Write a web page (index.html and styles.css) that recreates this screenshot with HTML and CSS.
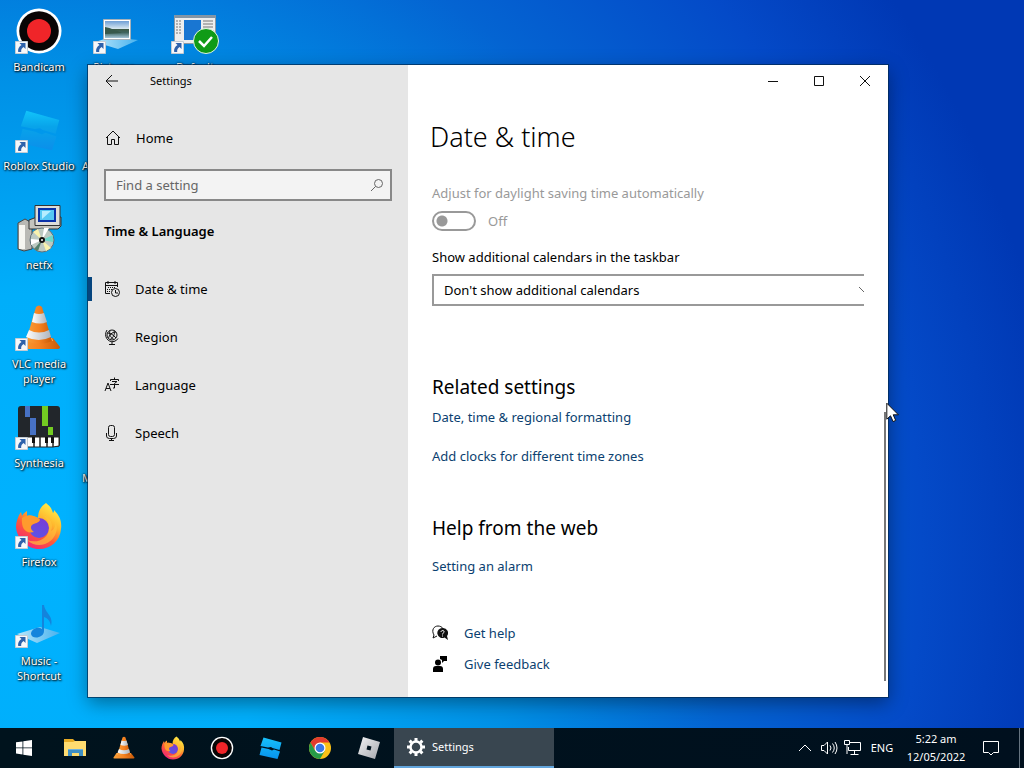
FILE: index.html
```html
<!DOCTYPE html>
<html lang="en">
<head>
<meta charset="utf-8">
<title>Settings</title>
<link rel="stylesheet" href="styles.css">
</head>
<body>
<svg class="defs" aria-hidden="true">
  <defs>
    <linearGradient id="orange" x2="1"><stop stop-color="#f9a13a"/><stop offset=".5" stop-color="#f58220"/><stop offset="1" stop-color="#c85a08"/></linearGradient>
    <linearGradient id="white" x2="1"><stop stop-color="#fff"/><stop offset="1" stop-color="#aeb4bb"/></linearGradient>
    <linearGradient id="fire" x1=".85" y1=".05" x2=".25" y2="1"><stop stop-color="#fff04a"/><stop offset=".35" stop-color="#ffb52c"/><stop offset=".62" stop-color="#ff5a37"/><stop offset="1" stop-color="#f0207c"/></linearGradient>
    <linearGradient id="violet" x1=".8" x2=".2" y2="1"><stop stop-color="#7a3bd6"/><stop offset="1" stop-color="#5b55e6"/></linearGradient>
    <linearGradient id="studio" y2="1" x2="0"><stop stop-color="#17c1fb"/><stop offset="1" stop-color="#0792ec"/></linearGradient>
    <linearGradient id="studiofade" y2="1" x2="0"><stop stop-color="#12c4fa"/><stop offset=".4" stop-color="#08a4ea"/><stop offset="1" stop-color="#0b8fea"/></linearGradient>
    <linearGradient id="silver" x2="1" y2="1"><stop stop-color="#f4f4f6"/><stop offset="1" stop-color="#a4a6ab"/></linearGradient>
    <linearGradient id="tray" x2="1"><stop stop-color="#b8e6fb"/><stop offset="1" stop-color="#48b2ee"/></linearGradient>
    <linearGradient id="photo" x2="0" y2="1"><stop stop-color="#6f9fd6"/><stop offset=".45" stop-color="#d5e6f0"/><stop offset=".5" stop-color="#3d5a48"/><stop offset=".68" stop-color="#40655f"/><stop offset="1" stop-color="#a4c5d8"/></linearGradient>
    <symbol id="arrow" viewBox="0 0 13 13"><path fill="#f6f8fa" stroke="#c4ccd4" d="M.5.5h12v12H.5z"/><path fill="#2e62ab" d="M4.500 2h6v6L8.600 6.100C6.700 7.200 6 8.600 6.200 11H3.200C2.500 8.200 4.100 5.500 6.500 4z"/></symbol>
    <symbol id="cone" viewBox="0 0 48 48"><path fill="url(#orange)" d="M9 34h29l7 9q0 2-2 2H5q-3 0-2-2z"/><path fill="#ffb45a" d="M10 34h27l1 3H9z"/><path fill="url(#orange)" d="M21 3q3-3 6 0l10 34q-12 6-26 0z"/><path fill="url(#white)" d="M19 9q5 2 10 0l3 9q-7 3-15 0z"/><path fill="url(#white)" d="M14 26q10 5 20 0l2 7q-12 6-25 0z"/></symbol>
    <symbol id="fox" viewBox="0 0 48 48"><path fill="url(#fire)" d="M31 1c4 3 6 6 7 10 1-1 1-2 1-3 6 6 8 12 7 19-1 12-10 20-22 20S2 37 1 25c0-5 2-11 5-15l1 4c1-2 3-4 5-5v5c4-1 8 0 11 2 0-7 3-12 8-15z"/><circle cx="24" cy="26" r="10" fill="url(#violet)"/><path fill="#ff9a2d" d="M7 16c4-3 9-3 13-1 3 1 5 1 5 3-1 3-5 3-8 5-2 2-1 5 2 7-8 2-13-3-12-14z"/><path fill="#ffc53a" d="M28 13c7 2 11 9 8 16 4-2 5-6 4-10 5 9-1 20-10 23-6 2-13 1-18-4 10 4 22-1 22-12 0-6-2-9-6-13z" opacity=".65"/></symbol>
    <symbol id="record" viewBox="0 0 48 48"><circle cx="24" cy="24" r="22.500" fill="#fff"/><circle cx="24" cy="24" r="19.800" fill="#090505"/><circle cx="24" cy="24" r="12" fill="#f02529"/></symbol>
    <symbol id="studioicon" viewBox="0 0 48 48"><path d="M9 3l36 10-4 15-14-4-3-2-6 1-15-3zM5 23l14 3 7 3 4-2 12 4-5 15L1 38z"/></symbol>
  </defs>
</svg>
<div class="screen">
  <main class="desktop">
    <div class="shortcuts">
      <div class="shortcut"><svg class="shortcut-icon" viewBox="0 0 48 48"><use href="#record"/><use href="#arrow" y="34" width="13" height="13"/></svg><span>Bandicam</span></div>
      <div class="shortcut"><svg class="shortcut-icon" viewBox="0 0 48 48"><use href="#studioicon" x="3" y="0" width="44" height="48" fill="url(#studiofade)"/><use href="#arrow" y="34" width="13" height="13"/></svg><span>Roblox Studio</span></div>
      <div class="shortcut"><svg class="shortcut-icon" viewBox="0 0 48 48"><path fill="#b9b9b4" stroke="#444" d="M3 18l7-4 7 4v26l-8 2-6-2z"/><path fill="#f6f6f1" d="M4 20h6v24H4z"/><path fill="#c4c4be" stroke="#333" d="M14 15l8-3h24v9l-3 3H14z"/><path fill="#ddddda" stroke="#333" d="M20 .5h25v20H20z"/><path fill="#0830a8" d="M23 3h18v14H23z"/><path fill="#55c8f4" d="M25 5h14v10H25z"/><path fill="#b5edff" d="M27 6h9l-9 8z"/><circle cx="27" cy="35" r="12" fill="#bcc9c2" stroke="#607078"/><path fill="#f8f2ae" d="M27 35L18 27l5-3zM27 35l9 8-5 3z"/><path fill="#6bd8c9" d="M27 35l11-5v7z"/><path fill="#fff" d="M27 35L16 40v-6zM27 35l2-12h5z"/><path fill="#55806c" d="M27 35l-4 11-4-2z"/><circle cx="27" cy="35" r="3" fill="#111"/><circle cx="27" cy="35" r="1" fill="#fff"/></svg><span>netfx</span></div>
      <div class="shortcut"><svg class="shortcut-icon" viewBox="0 0 48 48"><use href="#cone"/><use href="#arrow" y="34" width="13" height="13"/></svg><span>VLC media<br>player</span></div>
      <div class="shortcut"><svg class="shortcut-icon" viewBox="0 0 48 48"><rect x="3" y="3" width="42" height="41" rx="3" fill="#22262b"/><path fill="#4771c4" d="M10 3h5v11h-5zM15 15h6v17h-6z"/><path fill="#73cc22" d="M27 3h6v20h-6zM33 24h5v8h-5z"/><path stroke="#222" fill="#fff" d="M12 34h7v10h-7zM19 34h6v10h-6zM25 34h7v10h-7zM32 34h6v10h-6zM38 34h6v9l-6 1z"/><path fill="#111" d="M17 34h3v6h-3zM30 34h3v6h-3zM36 34h3v6h-3z"/><use href="#arrow" y="34" width="13" height="13"/></svg><span>Synthesia</span></div>
      <div class="shortcut"><svg class="shortcut-icon" viewBox="0 0 48 48"><use href="#fox"/><use href="#arrow" y="34" width="13" height="13"/></svg><span>Firefox</span></div>
      <div class="shortcut"><svg class="shortcut-icon" viewBox="0 0 48 48"><path fill="url(#tray)" d="M2 33l23-7 20 6-23 10z"/><path fill="#1484dc" d="M27 4h2c1 8 10 11 7 21-1-6-4-8-7-9v14c0 7-12 9-13 3 0-5 7-8 11-5z"/><use href="#arrow" y="34" width="13" height="13"/></svg><span>Music -<br>Shortcut</span></div>
      <div class="shortcut"><svg class="shortcut-icon" viewBox="0 0 48 48"><path fill="url(#tray)" d="M2 35l16-5 27 3-20 9z"/><path fill="#fff" stroke="#a5b1bb" d="M10.500 12.500h27v20h-27z"/><path fill="url(#photo)" d="M12 14h24v17H12z"/><path fill="#37584b" d="M12 20c6 1 12 4 17 6l-17 1z"/><use href="#arrow" y="34" width="13" height="13"/></svg><span>Pictures -</span></div>
      <div class="shortcut behind"><div class="shortcut-icon"></div><span>A</span></div>
      <div class="shortcut"></div>
      <div class="shortcut"></div>
      <div class="shortcut behind"><div class="shortcut-icon"></div><span><br>M</span></div>
      <div class="shortcut"></div>
      <div class="shortcut"></div>
      <div class="shortcut"><svg class="shortcut-icon" viewBox="0 0 48 48"><path fill="#eee" stroke="#8b98a4" d="M3.500 8.500h41v28h-41z"/><path fill="#8395a5" d="M4 8h40v3H4z"/><path fill="#1976d2" d="M13 13h17v20H13z"/><path stroke="#777" stroke-dasharray="2 1" d="M5 14h5M5 17h5M5 20h5M5 23h5M5 26h5"/><path stroke="#777" d="M32 14h10M32 17h10M32 20h10"/><circle cx="35" cy="34" r="12.500" fill="#109b17" stroke="#e5f5e5"/><path fill="none" stroke="#fff" stroke-width="2.500" d="M28 34l5 5 8-9"/><use href="#arrow" y="34" width="13" height="13"/></svg><span>Default</span></div>
    </div>

    <section class="window" aria-label="Settings">
      <aside class="sidebar">
        <header class="sidebar-title">
          <button class="back" aria-label="Back"><svg width="14" height="14" viewBox="0 0 14 14"><path class="line" d="M13 7H1M7 1L1 7l6 6"/></svg></button>
          <span>Settings</span>
        </header>
        <a class="home" href="#"><svg width="16" height="16" viewBox="0 0 16 16"><path class="line" d="M1 8l7-7 7 7M2.500 6.500v8h4v-5h3v5h4v-8"/></svg>Home</a>
        <div class="search">
          <input type="text" placeholder="Find a setting" aria-label="Find a setting">
          <svg width="14" height="14" viewBox="0 0 14 14"><circle cx="8.500" cy="5.500" r="4" fill="none" stroke="#666"/><path stroke="#666" d="M5.500 8.500L1 13"/></svg>
        </div>
        <h2>Time &amp; Language</h2>
        <nav>
          <a class="current" href="#"><svg width="16" height="16" viewBox="0 0 16 16"><path class="line" d="M6 12.500H1.500v-11h12V6M1.500 4.500h12M4 0v3M11 0v3"/><path stroke="#111" stroke-dasharray="1 1" d="M4 6.500h7M3 8.500h5M3 10.500h4"/><circle class="line" cx="11.500" cy="11.500" r="4"/><path class="line" d="M11.500 9v3H14"/></svg>Date &amp; time</a>
          <a href="#"><svg width="16" height="16" viewBox="0 0 16 16"><circle class="line" cx="8" cy="6" r="5"/><path class="line" d="M3.500 4c3 0 6 2 8.500 5M12 3C8 3 5 6 4.500 9.500M6 1.500c-1 3 0 7 4 9M10 1.500c1 3 0 7-4 9M3 1C-1 7 4 14 10 12.500q3-1 4-3M8 13v2M5 15.500h6"/></svg>Region</a>
          <a href="#"><svg width="16" height="16" viewBox="0 0 16 16"><path class="line" d="M1 14L4 6l3 8M2 11.500h4M10.500.5V2M6.500 4V2.500h8V4M8 4.500h5l-2.500 2V11H9M6 7.500h9"/></svg>Language</a>
          <a href="#"><svg width="16" height="16" viewBox="0 0 16 16"><rect class="line" x="4.500" y=".5" width="6" height="11" rx="2"/><path class="line" d="M2.500 8v3q0 2.500 3 2.500h4q3 0 3-2.500V8M7.500 13.500v2M5 15.500h5"/></svg>Speech</a>
        </nav>
      </aside>
      <div class="pane">
        <div class="caption">
          <button aria-label="Minimize"><svg width="12" height="12" viewBox="0 0 12 12"><path class="line" d="M1 6.500h10"/></svg></button>
          <button aria-label="Maximize"><svg width="12" height="12" viewBox="0 0 12 12"><path class="line" d="M1.500 1.500h9v9h-9z"/></svg></button>
          <button aria-label="Close"><svg width="12" height="12" viewBox="0 0 12 12"><path class="line" d="M1 1l10 10M11 1L1 11"/></svg></button>
        </div>
        <h1>Date &amp; time</h1>
        <div class="content">
          <label class="disabled" for="dst">Adjust for daylight saving time automatically</label>
          <div class="toggle-row"><input id="dst" type="checkbox" role="switch" disabled><span>Off</span></div>
          <label for="calendars">Show additional calendars in the taskbar</label>
          <div class="select-clip">
            <div class="select-box">
              <select id="calendars"><option>Don't show additional calendars</option></select>
              <svg width="12" height="8" viewBox="0 0 12 8"><path fill="none" stroke="#666" d="M1 1l5 5 5-5"/></svg>
            </div>
          </div>
          <h3>Related settings</h3>
          <div class="links">
            <a href="#">Date, time &amp; regional formatting</a>
            <a href="#">Add clocks for different time zones</a>
          </div>
          <h3>Help from the web</h3>
          <div class="links web"><a href="#">Setting an alarm</a></div>
          <div class="support">
            <a href="#"><svg width="16" height="16" viewBox="0 0 16 16"><path class="line" d="M5 11l-4 2 1-3C-1 5 2 1 6 1c2 0 4 1 4.500 2"/><path fill="#111" d="M10.500 3a5 5 0 1 0 2 9.500L16 15l-1-4A5 5 0 0 0 10.500 3z"/><path fill="none" stroke="#fff" d="M9 7c0-2 3.500-2 3 0 0 1-1.500 1-1.500 2.500M10.500 10.500v1"/></svg>Get help</a>
            <a href="#"><svg width="16" height="16" viewBox="0 0 16 16"><circle cx="6" cy="6.500" r="3"/><path d="M1 16v-3q0-3 3-3h4q3 0 3 3v3zM8 0h7v5h-3l-2 2V4L8 3z"/></svg>Give feedback</a>
          </div>
        </div>
        <div class="scrollbar"></div>
      </div>
    </section>
  </main>

  <footer class="taskbar">
    <button class="start" aria-label="Start"><svg width="16" height="16" viewBox="0 0 16 16"><path fill="#fff" d="M0 2.300L6.500 1.400v6.100H0zM7.300 1.300L16 0v7.500H7.300zM0 8.300h6.500v6.200L0 13.600zM7.300 8.300H16V16l-8.700-1.300z"/></svg></button>
    <button aria-label="File Explorer"><svg width="24" height="24" viewBox="0 0 24 24"><path fill="#e8ac25" d="M1 3h9l2 2h10v15H1z"/><path fill="#ffdc70" d="M1 6h9l2-1h11v15H1z"/><path fill="#3e8fc4" d="M5 13h15v7h-4v-3H9v3H5z"/><path fill="#6fb2dc" d="M5 13h15v1H5z"/></svg></button>
    <button aria-label="VLC media player"><svg width="24" height="24"><use href="#cone"/></svg></button>
    <button aria-label="Firefox"><svg width="24" height="24"><use href="#fox"/></svg></button>
    <button aria-label="Bandicam"><svg width="24" height="24"><use href="#record"/></svg></button>
    <button aria-label="Roblox Studio"><svg width="24" height="24"><use href="#studioicon" fill="url(#studio)"/></svg></button>
    <button aria-label="Chrome"><svg width="24" height="24" viewBox="0 0 24 24"><circle cx="12" cy="12" r="11" fill="#fbc116"/><path fill="#e33b2e" d="M2.500 6.500A11 11 0 0 1 21.500 6.500H12L7.200 14.700z"/><path fill="#279b48" d="M2.500 6.500A11 11 0 0 0 12 23l4.800-8.200H7.200z"/><circle cx="12" cy="12" r="5.500" fill="#fff"/><circle cx="12" cy="12" r="4.300" fill="#3b78e7"/></svg></button>
    <button aria-label="Roblox"><svg width="24" height="24" viewBox="0 0 24 24"><path fill="url(#silver)" fill-rule="evenodd" d="M6 1l17 5-5 17-17-5zM10.500 9.500l-1 4 4 1 1-4z"/></svg></button>
    <button class="running"><svg width="20" height="20" viewBox="0 0 20 20"><circle cx="10" cy="10" r="5.500" fill="none" stroke="#fff" stroke-width="2.500"/><path stroke="#fff" stroke-width="3" d="M10 1v3M10 16v3M1 10h3M16 10h3M3.600 3.600l2 2M14.400 14.400l2 2M3.600 16.400l2-2M14.400 5.600l2-2"/></svg>Settings</button>
    <div class="tray">
      <button aria-label="Show hidden icons"><svg width="14" height="14" viewBox="0 0 14 14"><path class="light" d="M1 10l6-6 6 6"/></svg></button>
      <button aria-label="Volume"><svg width="18" height="16" viewBox="0 0 18 16"><path class="light" d="M1.500 5.500H4L7.500 2v12L4 10.500H1.500zM10 5.500q2 2.500 0 5M12.500 3.500q3.500 4.500 0 9M15 2q4 6 0 12"/></svg></button>
      <button aria-label="Network"><svg width="18" height="16" viewBox="0 0 18 16"><path class="light" d="M6 2.500h10.500v8h-12V7M.5.5h5v4h-5zM3 5v9M10.500 11v3.500M6.500 14.500h8"/></svg></button>
      <button class="language">ENG</button>
      <button class="clock"><span>5:22 am</span><span>12/05/2022</span></button>
      <button class="notifications" aria-label="Notifications"><svg width="18" height="18" viewBox="0 0 18 18"><path class="light" d="M1.500 2.500h15v11h-5L9 16l-2.500-2.500h-5z"/></svg></button>
      <button class="peek" aria-label="Show desktop"></button>
    </div>
  </footer>
  <svg class="pointer" width="14" height="21" viewBox="0 0 14 21"><path fill="#fff" stroke="#111" d="M.8 1.200v16l3.700-3.400 2.600 5.800 2.600-1.200-2.500-5.600h5.200z"/></svg>
</div>
</body>
</html>
```

FILE: styles.css
```css
* { box-sizing: border-box; }
body { margin: 0; font: 13px/20px "Noto Sans", "Open Sans", sans-serif; color: #000; }
button, input, select { font: inherit; color: inherit; margin: 0; }
button { border: 0; padding: 0; background: none; display: flex; align-items: center; justify-content: center; }
a { color: inherit; text-decoration: none; }
h1, h2, h3 { margin: 0; }
svg { flex: none; }
.defs { position: absolute; width: 0; height: 0; }
.line { fill: none; stroke: #111; }
.light { fill: none; stroke: #fff; }

.screen {
  position: relative; display: flex; flex-direction: column; height: 100vh; overflow: hidden;
  background: radial-gradient(ellipse 100% 130% at 4% 72%, #00b2ff 0%, #00aefa 26%, #0090e6 48%, #0464d2 68%, #044ac8 86%, #0038b4 100%);
}
.desktop { position: relative; flex: 1; min-height: 0; }

.shortcuts { display: grid; grid-auto-flow: column; grid-template-rows: repeat(7, 99px); grid-auto-columns: 78px; }
.shortcut { display: flex; flex-direction: column; align-items: center; gap: 4px; padding-top: 7px; color: #fff; font-size: 11px; line-height: 15px; text-align: center; white-space: nowrap; text-shadow: 1px 1px 2px #000, 0 0 2px #000; }
.shortcut-icon { width: 48px; height: 48px; flex: none; }
.behind { align-items: flex-start; padding-left: 4px; }

.window { position: absolute; inset: 65px 136px 31px 88px; display: flex; background: #fff; box-shadow: 0 0 0 1px rgba(0, 40, 80, .7), 0 6px 18px rgba(0, 0, 0, .4); }
.sidebar { width: 40%; background: #e6e6e6; }
.sidebar-title { display: flex; align-items: center; height: 32px; font-size: 11px; }
.back { width: 48px; height: 32px; margin-right: 14px; }
.home { display: flex; align-items: center; gap: 15px; height: 48px; margin-top: 17px; padding-left: 17px; }
.search { display: flex; align-items: center; height: 32px; margin: 7px 16px 0; padding: 0 6px 0 10px; border: 2px solid #888; background: #f3f3f3; }
.search input { flex: 1; min-width: 0; border: 0; padding: 0; outline: 0; background: none; }
.search input::placeholder { color: #666; opacity: 1; }
.sidebar h2 { margin: 20px 16px 24px; font-size: 13px; line-height: 20px; font-weight: 600; }
nav a { display: flex; align-items: center; gap: 15px; height: 48px; padding-left: 12px; border-left: 4px solid transparent; }
nav .current { border-image: linear-gradient(transparent 12px, #06457e 12px, #06457e 36px, transparent 36px) 0 0 0 4; }

.pane { position: relative; flex: 1; min-width: 0; }
.caption { display: flex; justify-content: flex-end; height: 32px; }
.caption button { width: 46px; }
h1 { margin: 22px 22px 0; font-size: 27px; line-height: 36px; font-weight: 300; }
.content { display: flex; flex-direction: column; padding: 28px 24px 0; }
.disabled, .toggle-row { color: #999; }
.toggle-row { display: flex; align-items: center; gap: 12px; height: 20px; margin: 8px 0 16px; }
.toggle-row input { appearance: none; width: 44px; height: 20px; border: 2px solid #999; border-radius: 10px; background: radial-gradient(circle at 8px 8px, #999 5px, transparent 6px); }
.select-clip { overflow: hidden; margin-top: 7px; }
.select-box { display: flex; align-items: center; width: calc(100% + 16px); height: 32px; border: 2px solid #999; padding: 0 8px 0 10px; }
.select-box select { appearance: none; flex: 1; min-width: 0; border: 0; padding: 0; background: none; color: #000; }
h3 { margin-top: 67px; font-size: 19px; line-height: 28px; font-weight: 400; }
.links { display: flex; flex-direction: column; gap: 19px; margin-top: 6px; color: #0b3f70; }
.links + h3 { margin-top: 48px; }
.links.web { margin-top: 14px; }
.support { display: flex; flex-direction: column; gap: 11px; margin-top: 47px; color: #0b3f70; }
.support a { display: flex; align-items: center; gap: 16px; height: 20px; }
.scrollbar { position: absolute; right: 2px; top: 347px; bottom: 16px; width: 2px; background: #777; }

.taskbar { display: flex; height: 40px; background: linear-gradient(90deg, #00131d, #00101e); color: #fff; font-size: 11px; }
.taskbar > button { width: 49px; }
.taskbar .start { width: 48px; margin-right: 2px; }
.taskbar .running { justify-content: flex-start; gap: 6px; width: 160px; margin-left: 1px; padding-left: 12px; background: #394650; border-bottom: 2px solid #62a5dc; }
.tray { display: flex; align-items: stretch; margin-left: auto; }
.tray button { width: 24px; }
.tray .language { width: 34px; }
.tray .clock { flex-direction: column; width: 74px; line-height: 18px; }
.tray .notifications { width: 36px; margin-right: 10px; }
.tray .peek { width: 5px; border-left: 1px solid #667480; }
.pointer { position: absolute; left: 886px; top: 402px; }
```
